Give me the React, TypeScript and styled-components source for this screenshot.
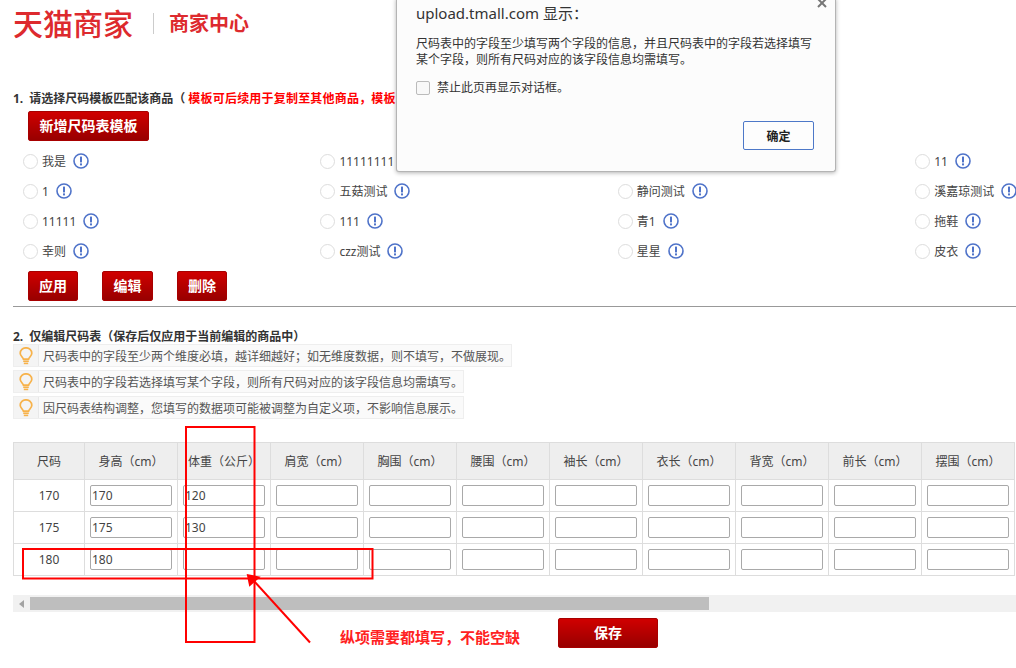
import React from 'react'
import styled, { createGlobalStyle } from 'styled-components'

const GlobalStyle = createGlobalStyle`
  html, body {
    margin: 0;
    padding: 0;
    background: #fff;
    overflow: hidden;
  }
  body {
    font-family: "Noto Sans", "Noto Sans CJK SC", sans-serif;
    font-size: 12px;
    color: #333;
  }
`

const Page = styled.div`
  position: relative;
  width: 1016px;
  height: 668px;
  overflow: hidden;
`

const Header = styled.header`
  height: 90px;
  box-sizing: border-box;
  padding: 4px 0 0 13px;
  display: flex;
  align-items: flex-start;
`

const LogoMain = styled.div`
  font-size: 30px;
  line-height: 40px;
  font-weight: 500;
  color: #dd2a2e;
  white-space: nowrap;
`

const LogoDivider = styled.div`
  width: 1px;
  height: 21px;
  margin: 9px 15px 0 20px;
  background: #ccc;
`

const LogoSub = styled.div`
  font-size: 20px;
  line-height: 40px;
  font-weight: 700;
  color: #dd2a2e;
  white-space: nowrap;
`

const Heading = styled.div<{ $gap?: number }>`
  height: 16px;
  margin-top: ${p => p.$gap ?? 0}px;
  line-height: 18px;
  padding-left: 13px;
  font-size: 12px;
  font-weight: 700;
  word-spacing: 3px;
  color: #333;
  white-space: nowrap;
`

const Warn = styled.span`
  margin-left: 3px;
  letter-spacing: 0.2px;
  color: #f00;
`

const RedButton = styled.button<{ $w: number }>`
  display: block;
  width: ${p => p.$w}px;
  height: 30px;
  padding: 0;
  border: 1px solid #a80000;
  border-radius: 2px;
  background: linear-gradient(#d00000, #980000);
  color: #fff;
  font-family: inherit;
  font-size: 14px;
  font-weight: 700;
  line-height: 26px;
`

const AddRow = styled.div`
  margin: 5px 0 0 28px;
`

const TemplateGrid = styled.div`
  margin-top: 5px;
  padding-left: 23px;
  display: grid;
  grid-template-columns: repeat(4, 297.4px);
  grid-auto-rows: 30px;
`

const TemplateItem = styled.label`
  display: flex;
  align-items: center;
  white-space: nowrap;
  color: #444;
`

const Radio = styled.span`
  width: 15px;
  height: 15px;
  box-sizing: border-box;
  border: 1px solid #ddd;
  border-radius: 50%;
  margin-right: 4px;
  background: #fff;
  flex: none;
`

const InfoWrap = styled.span`
  display: inline-flex;
  margin-left: 7px;
`

const ActionRow = styled.div`
  margin: 5px 0 0 28px;
  display: flex;
  gap: 24px;
`

const Rule = styled.hr`
  margin: 5px 0 0 13px;
  border: 0;
  height: 1px;
  background: #999;
`

const TipList = styled.div`
  padding-left: 13px;
  display: flex;
  flex-direction: column;
  align-items: flex-start;
  gap: 3px;
`

const Tip = styled.div<{ $w: number }>`
  width: ${p => p.$w}px;
  height: 23px;
  box-sizing: border-box;
  display: flex;
  align-items: center;
  border: 1px solid #eee;
  background: #fafafa;
  color: #555;
  white-space: nowrap;
`

const TipIcon = styled.span`
  width: 24px;
  height: 21px;
  margin-right: 4px;
  border-right: 1px solid #e8e8e8;
  background: #f4f4f4;
  display: flex;
  align-items: center;
  justify-content: center;
  flex: none;
`

const TableWrap = styled.div`
  margin: 23px 0 0 13px;
  width: 1003px;
  overflow: hidden;
`

const SizeTable = styled.table`
  border-collapse: collapse;
  table-layout: fixed;
  width: 1002px;
`

const Th = styled.th<{ $first?: boolean }>`
  box-sizing: border-box;
  width: ${p => (p.$first ? 71 : 93)}px;
  height: 37px;
  padding: 0;
  border: 1px solid #ddd;
  background: #eee;
  font-weight: 400;
  color: #444;
  text-align: center;
  white-space: nowrap;
`

const Td = styled.td`
  box-sizing: border-box;
  height: 32px;
  padding: 0;
  border: 1px solid #ddd;
  text-align: center;
  color: #444;
`

const CellInput = styled.input`
  display: block;
  width: 82px;
  height: 21px;
  box-sizing: border-box;
  margin: 0 auto 0 5px;
  padding: 0 1px;
  border: 1px solid #a9a9a9;
  border-radius: 2px;
  font-family: inherit;
  font-size: 12px;
  color: #444;
  background: #fff;
  outline: none;
`

const Scrollbar = styled.div`
  margin: 19px 0 0 13px;
  height: 17px;
  background: #f1f1f1;
  display: flex;
  align-items: center;
`

const ScrollArrow = styled.span`
  width: 0;
  height: 0;
  margin: 0 6px 0 6px;
  border-style: solid;
  border-width: 4px 5px 4px 0;
  border-color: transparent #a3a3a3 transparent transparent;
  flex: none;
`

const ScrollThumb = styled.div`
  width: 679px;
  height: 13px;
  background: #bebebe;
`

const SaveRow = styled.div`
  margin: 6px 0 0 558px;
`

// annotation drawn on top of the screenshot
const Markup = styled.svg`
  position: absolute;
  left: 0;
  top: 0;
  pointer-events: none;
`

const MarkupNote = styled.div`
  position: absolute;
  left: 340px;
  top: 626px;
  line-height: 22px;
  font-size: 15px;
  font-weight: 700;
  color: #f22;
  white-space: nowrap;
`

const Dialog = styled.div`
  position: absolute;
  left: 396px;
  top: -2px;
  width: 440px;
  height: 174px;
  box-sizing: border-box;
  padding: 4px 19px 0;
  background: #fcfcfc;
  border: 1px solid #b4b4b4;
  border-top: 0;
  border-radius: 0 0 3px 3px;
  box-shadow: 0 1px 4px rgba(0, 0, 0, 0.3);
`

const DialogClose = styled.span`
  position: absolute;
  right: 8px;
  top: 0;
  display: flex;
`

const DialogTitle = styled.div`
  font-size: 15px;
  line-height: 22px;
  color: #333;
  white-space: nowrap;
`

const DialogBody = styled.div`
  margin-top: 12px;
  line-height: 16px;
  color: #333;
  white-space: nowrap;
`

const DialogCheckRow = styled.label`
  margin-top: 12px;
  display: flex;
  align-items: center;
  line-height: 16px;
  color: #333;
`

const DialogCheck = styled.span`
  width: 14px;
  height: 14px;
  box-sizing: border-box;
  margin-right: 7px;
  border: 1px solid #bbb;
  border-radius: 2px;
  background: #f8f8f8;
`

const DialogFooter = styled.div`
  margin-top: 25px;
  display: flex;
  justify-content: flex-end;
  padding-right: 2px;
`

const DialogOk = styled.button`
  width: 71px;
  height: 29px;
  padding: 0;
  border: 1px solid #4d78c8;
  border-radius: 2px;
  background: #fdfdfd;
  font-family: inherit;
  font-size: 12px;
  font-weight: 700;
  color: #222;
`

const Info = () => (
  <InfoWrap>
    <svg width="16" height="16" viewBox="0 0 16 16">
      <circle cx="8" cy="8" r="7" fill="#fff" stroke="#4f73c9" strokeWidth="1.6" />
      <rect x="7" y="3.6" width="2" height="5.8" fill="#4f73c9" />
      <rect x="7" y="10.4" width="2" height="2" fill="#4f73c9" />
    </svg>
  </InfoWrap>
)

const Bulb = () => (
  <svg width="14" height="18" viewBox="0 0 14 18" fill="none">
    <path
      d="M4.4 12.2C4.2 10.4 1.2 9 1.2 6.2a5.8 5.4 0 0 1 11.6 0c0 2.8-3 4.2-3.2 6z"
      stroke="#f7b24a"
      strokeWidth="1.7"
    />
    <rect x="4.2" y="13.4" width="5.6" height="1.6" fill="#f7b24a" />
    <rect x="4.8" y="15.6" width="4.4" height="1.6" fill="#f7b24a" />
  </svg>
)

// null: the cell sits behind the dialog in the screenshot
const templates: (string | null)[] = [
  '我是', '11111111', null, '11',
  '1', '五菇测试', '静问测试', '溪嘉琼测试',
  '11111', '111', '青1', '拖鞋',
  '幸则', 'czz测试', '星星', '皮衣',
]

const columns = ['身高（cm）', '体重（公斤）', '肩宽（cm）', '胸围（cm）', '腰围（cm）', '袖长（cm）', '衣长（cm）', '背宽（cm）', '前长（cm）', '摆围（cm）']

const rows = [
  { size: '170', values: ['170', '120'] },
  { size: '175', values: ['175', '130'] },
  { size: '180', values: ['180'] },
]

const tips = [
  { w: 499, text: '尺码表中的字段至少两个维度必填，越详细越好；如无维度数据，则不填写，不做展现。' },
  { w: 451, text: '尺码表中的字段若选择填写某个字段，则所有尺码对应的该字段信息均需填写。' },
  { w: 451, text: '因尺码表结构调整，您填写的数据项可能被调整为自定义项，不影响信息展示。' },
]

export default function App() {
  return (
    <Page>
      <GlobalStyle />
      <Header>
        <LogoMain>天猫商家</LogoMain>
        <LogoDivider />
        <LogoSub>商家中心</LogoSub>
      </Header>

      <Heading>
        1. 请选择尺码模板匹配该商品（<Warn>模板可后续用于复制至其他商品，模板</Warn>
      </Heading>
      <AddRow>
        <RedButton $w={121}>新增尺码表模板</RedButton>
      </AddRow>
      <TemplateGrid>
        {templates.map((name, i) =>
          name === null ? (
            <span key={i} />
          ) : (
            <TemplateItem key={i}>
              <Radio />
              {name}
              <Info />
            </TemplateItem>
          ),
        )}
      </TemplateGrid>
      <ActionRow>
        <RedButton $w={50}>应用</RedButton>
        <RedButton $w={51}>编辑</RedButton>
        <RedButton $w={50}>删除</RedButton>
      </ActionRow>
      <Rule />

      <Heading $gap={21}>2. 仅编辑尺码表（保存后仅应用于当前编辑的商品中）</Heading>
      <TipList>
        {tips.map(t => (
          <Tip key={t.text} $w={t.w}>
            <TipIcon>
              <Bulb />
            </TipIcon>
            {t.text}
          </Tip>
        ))}
      </TipList>

      <TableWrap>
        <SizeTable>
          <thead>
            <tr>
              <Th $first>尺码</Th>
              {columns.map(c => (
                <Th key={c}>{c}</Th>
              ))}
            </tr>
          </thead>
          <tbody>
            {rows.map(r => (
              <tr key={r.size}>
                <Td>{r.size}</Td>
                {columns.map((c, i) => (
                  <Td key={c}>
                    <CellInput defaultValue={r.values[i] ?? ''} />
                  </Td>
                ))}
              </tr>
            ))}
          </tbody>
        </SizeTable>
      </TableWrap>

      <Scrollbar>
        <ScrollArrow />
        <ScrollThumb />
      </Scrollbar>
      <SaveRow>
        <RedButton $w={100}>保存</RedButton>
      </SaveRow>

      <Markup width="1016" height="668" viewBox="0 0 1016 668" fill="none">
        <rect x="186" y="427" width="68.5" height="215" stroke="#f00" strokeWidth="2" />
        <rect x="23" y="549" width="349.5" height="29.5" stroke="#f00" strokeWidth="2" />
        <path d="M253 580 L310 642.5" stroke="#f00" strokeWidth="2" />
        <path d="M246.7 574 L260.7 576.7 L249.3 586.7 Z" fill="#f00" />
      </Markup>
      <MarkupNote>纵项需要都填写，不能空缺</MarkupNote>

      <Dialog>
        <DialogClose>
          <svg width="10" height="10" viewBox="0 0 10 10">
            <path d="M1 1 L9 9 M9 1 L1 9" stroke="#777" strokeWidth="2" />
          </svg>
        </DialogClose>
        <DialogTitle>upload.tmall.com 显示：</DialogTitle>
        <DialogBody>
          尺码表中的字段至少填写两个字段的信息，并且尺码表中的字段若选择填写
          <br />
          某个字段，则所有尺码对应的该字段信息均需填写。
        </DialogBody>
        <DialogCheckRow>
          <DialogCheck />
          禁止此页再显示对话框。
        </DialogCheckRow>
        <DialogFooter>
          <DialogOk>确定</DialogOk>
        </DialogFooter>
      </Dialog>
    </Page>
  )
}
